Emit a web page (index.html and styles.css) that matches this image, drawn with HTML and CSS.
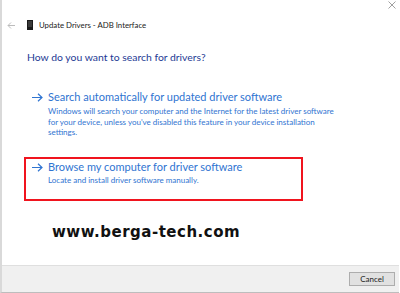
FILE: index.html
```html
<!DOCTYPE html>
<html lang="en">
<head>
  <meta charset="UTF-8">
  <title>Update Drivers - ADB Interface</title>
  <link rel="stylesheet" href="styles.css">
</head>
<body>
  <div class="window">
    <!-- title bar -->
    <div class="titlebar">
      <svg class="close" width="8" height="8" viewBox="0 0 8 8">
        <path d="M0.5 0.5 L7.5 7.5 M7.5 0.5 L0.5 7.5" stroke="#a0a0a0" stroke-width="1"/>
      </svg>
    </div>

    <div class="header">
      <svg class="back" width="8" height="7" viewBox="0 0 8 7">
        <path d="M8 3.5 H1 M4 0.5 L1 3.5 L4 6.5" stroke="#bcbcbc" stroke-width="1" fill="none"/>
      </svg>
      <svg class="device" width="6" height="10" viewBox="0 0 6 10">
        <rect x="0" y="0" width="6" height="10" fill="#1a1a1a"/>
        <rect x="1" y="1" width="4" height="6" fill="#3a3a3a"/>
      </svg>
      <span class="title">Update Drivers - ADB Interface</span>
    </div>

    <div class="content">
      <h1>How do you want to search for drivers?</h1>

      <div class="option option-auto">
        <svg class="arrow" width="11" height="9" viewBox="0 0 11 9">
          <path d="M0 4.5 H10 M6 0.7 L10 4.5 L6 8.3" stroke="#2f74d1" stroke-width="1.2" fill="none"/>
        </svg>
        <div class="option-text">
          <div class="option-title">Search automatically for updated driver software</div>
          <p>Windows will search your computer and the Internet for the latest driver software for your device, unless you've disabled this feature in your device installation settings.</p>
        </div>
      </div>

      <div class="option option-browse">
        <svg class="arrow" width="11" height="9" viewBox="0 0 11 9">
          <path d="M0 4.5 H10 M6 0.7 L10 4.5 L6 8.3" stroke="#2f74d1" stroke-width="1.2" fill="none"/>
        </svg>
        <div class="option-text">
          <div class="option-title">Browse my computer for driver software</div>
          <p>Locate and install driver software manually.</p>
        </div>
      </div>

      <div class="watermark">www.berga-tech.com</div>
    </div>

    <!-- footer -->
    <div class="footer">
      <button class="cancel">Cancel</button>
    </div>
  </div>
</body>
</html>
```

FILE: styles.css
```css
/* ===== base ===== */
body {
  margin: 0;
  background: #fff;
  font-family: Lato, "Noto Sans", sans-serif;
}

.window {
  width: 397px;
  height: 292px;
  border-left: 2px solid #d9d9d9;
  border-bottom: 1px solid #bdbdbd;
  display: flex;
  flex-direction: column;
}

/* ===== title bar ===== */
.titlebar {
  height: 14px;
  display: flex;
  justify-content: flex-end;
  align-items: flex-start;
}
.close {
  margin: 1px 3px 0 0;
}

.header {
  height: 22px;
  display: flex;
  align-items: center;
  padding-left: 5px;
}
.back {
  margin-right: 12px;
}
.device {
  margin-right: 6px;
}
.title {
  font-size: 7.8px;
  color: #1a1a1a;
}

/* ===== content ===== */
.content {
  flex: 1;
  padding-left: 22px;
}
h1 {
  margin: 13px 0 0 3px;
  font-size: 10.4px;
  font-weight: normal;
  color: #1d3a94;
  line-height: 16px;
}

.option {
  display: flex;
  color: #2f74d1;
}
.arrow {
  flex-shrink: 0;
  margin: 3px 5px 0 8px;
}
.option-title {
  font-size: 11px;
  line-height: 14px;
}
.option p {
  margin: 2px 0 0;
  font-size: 8px;
  line-height: 10.5px;
}

.option-auto {
  margin-top: 25px;
  width: 310px;
}
.option-browse {
  margin-top: 19px;
  width: 275px;
  height: 39px;
  border: 2px solid #f0141e;
  padding-top: 1px;
}
.option-browse .arrow {
  margin-left: 6px;
}
.option-browse p {
  margin-top: 1px;
}

.watermark {
  margin: 22px 0 0 28px;
  font-family: "DejaVu Sans", sans-serif;
  font-weight: bold;
  font-size: 15px;
  color: #111;
  letter-spacing: 0.5px;
}

/* ===== footer ===== */
.footer {
  height: 26px;
  background: #f0f0f0;
  border-top: 1px solid #dfdfdf;
  display: flex;
  justify-content: flex-end;
  align-items: center;
}
.cancel {
  width: 46px;
  height: 14px;
  margin-right: 4px;
  padding: 0;
  background: #e1e1e1;
  border: 1px solid #adadad;
  font-family: Lato, sans-serif;
  font-size: 8px;
  color: #1a1a1a;
}
```
